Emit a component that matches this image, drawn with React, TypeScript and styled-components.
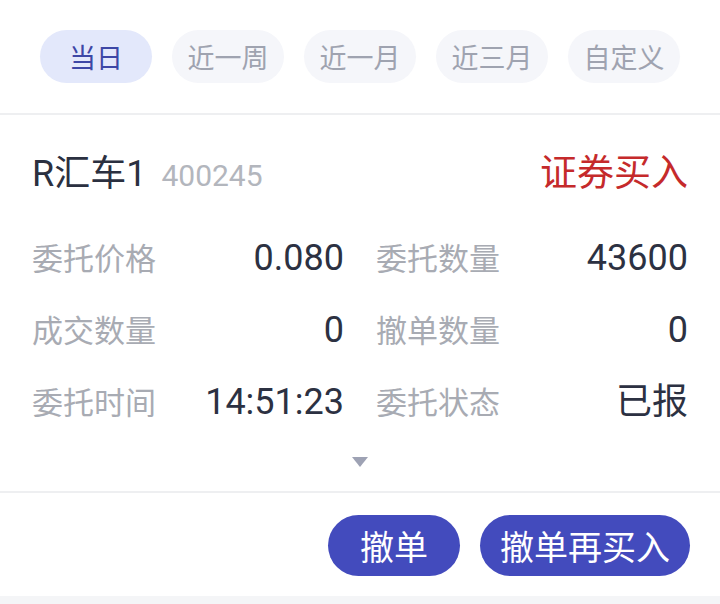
import React from "react";
import styled, { createGlobalStyle } from "styled-components";

const GlobalStyle = createGlobalStyle`
  body {
    margin: 0;
    background: #f4f5f7;
    font-family: Roboto, "Noto Sans CJK SC", sans-serif;
  }
`;

const Page = styled.div`
  width: 720px;
  height: 604px;
  background: #f4f5f7;
`;

const Panel = styled.div`
  background: #ffffff;
`;

const TabBar = styled.div`
  display: flex;
  gap: 20px;
  padding: 30px 40px;
  border-bottom: 2px solid #eeeff1;
`;

const Tab = styled.button<{ $active?: boolean }>`
  width: 112px;
  height: 53px;
  border: none;
  border-radius: 27px;
  background: ${(p) => (p.$active ? "#e3e8fb" : "#f5f6fa")};
  color: ${(p) => (p.$active ? "#3d47a6" : "#9fa3b0")};
  font-family: inherit;
  font-size: 27px;
  padding: 0;
`;

const Card = styled.div`
  padding: 0 32px;
`;

const Header = styled.div`
  display: flex;
  align-items: center;
  justify-content: space-between;
  height: 60px;
  margin-top: 25px;
`;

const Title = styled.div`
  display: flex;
  align-items: baseline;
  gap: 15px;
`;

const Name = styled.span`
  font-size: 36px;
  color: #2b3040;
`;

const Code = styled.span`
  font-size: 30px;
  color: #b3b6bd;
`;

const Side = styled.span`
  font-size: 37px;
  color: #c52a2b;
`;

const Grid = styled.div`
  display: grid;
  grid-template-columns: 1fr 1fr;
  column-gap: 32px;
  margin-top: 22px;
`;

const Cell = styled.div`
  display: flex;
  align-items: baseline;
  justify-content: space-between;
  height: 72px;
  line-height: 72px;
`;

const Label = styled.span`
  font-size: 31px;
  color: #a8abb3;
`;

const Value = styled.span`
  font-size: 36px;
  color: #2c3142;
`;

const Toggle = styled.div`
  display: flex;
  justify-content: center;
  align-items: center;
  height: 55px;
  padding-bottom: 6px;
  box-sizing: border-box;
  border-bottom: 2px solid #eeeff1;
  margin: 0 -32px;
`;

const Arrow = styled.div`
  width: 0;
  height: 0;
  border-left: 8px solid transparent;
  border-right: 8px solid transparent;
  border-top: 10px solid #9ea2b4;
`;

const Actions = styled.div`
  display: flex;
  justify-content: flex-end;
  gap: 20px;
  padding: 22px 30px 20px;
`;

const Action = styled.button`
  min-width: 132px;
  height: 61px;
  padding: 0 20px;
  border: none;
  border-radius: 31px;
  background: #434bbd;
  color: #ffffff;
  font-family: inherit;
  font-size: 34px;
`;

const tabs = ["当日", "近一周", "近一月", "近三月", "自定义"];

const fields: [string, string][] = [
  ["委托价格", "0.080"],
  ["委托数量", "43600"],
  ["成交数量", "0"],
  ["撤单数量", "0"],
  ["委托时间", "14:51:23"],
  ["委托状态", "已报"],
];

export default function App() {
  return (
    <Page>
      <GlobalStyle />
      <Panel>
        <TabBar>
          {tabs.map((t, i) => (
            <Tab key={t} $active={i === 0}>
              {t}
            </Tab>
          ))}
        </TabBar>
        <Card>
          <Header>
            <Title>
              <Name>R汇车1</Name>
              <Code>400245</Code>
            </Title>
            <Side>证券买入</Side>
          </Header>
          <Grid>
            {fields.map(([k, v]) => (
              <Cell key={k}>
                <Label>{k}</Label>
                <Value>{v}</Value>
              </Cell>
            ))}
          </Grid>
          <Toggle>
            <Arrow />
          </Toggle>
        </Card>
        <Actions>
          <Action>撤单</Action>
          <Action>撤单再买入</Action>
        </Actions>
      </Panel>
    </Page>
  );
}
